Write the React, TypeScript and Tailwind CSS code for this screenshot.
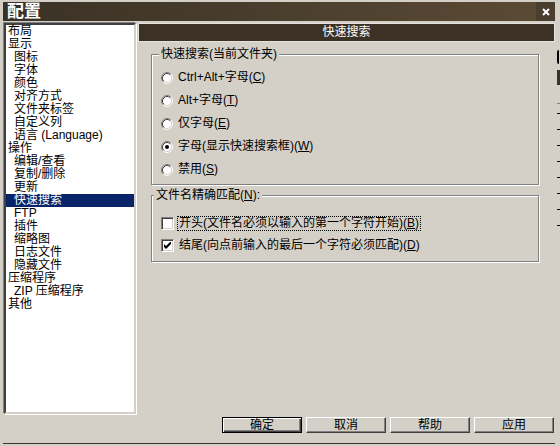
import React from 'react';

const treeItems: [string, number][] = [
  ['布局', 0],
  ['显示', 0],
  ['图标', 1],
  ['字体', 1],
  ['颜色', 1],
  ['对齐方式', 1],
  ['文件夹标签', 1],
  ['自定义列', 1],
  ['语言 (Language)', 1],
  ['操作', 0],
  ['编辑/查看', 1],
  ['复制/删除', 1],
  ['更新', 1],
  ['快速搜索', 1],
  ['FTP', 1],
  ['插件', 1],
  ['缩略图', 1],
  ['日志文件', 1],
  ['隐藏文件', 1],
  ['压缩程序', 0],
  ['ZIP 压缩程序', 1],
  ['其他', 0],
];

function Radio({ checked }: { checked?: boolean }) {
  return (
    <svg width="12" height="12" viewBox="0 0 12 12" className="shrink-0">
      <circle cx="6" cy="6" r="4.5" fill="#fff" />
      <path d="M2.11 9.89A5.5 5.5 0 0 1 9.89 2.11" fill="none" stroke="#808080" />
      <path d="M9.89 2.11A5.5 5.5 0 0 1 2.11 9.89" fill="none" stroke="#fff" />
      <path d="M2.82 9.18A4.5 4.5 0 0 1 9.18 2.82" fill="none" stroke="#404040" />
      <path d="M9.18 2.82A4.5 4.5 0 0 1 2.82 9.18" fill="none" stroke="#d4d0c8" />
      {checked && <circle cx="6" cy="6" r="2" fill="#000" />}
    </svg>
  );
}

function Checkbox({ checked }: { checked?: boolean }) {
  return (
    <div className="w-[13px] h-[13px] shrink-0 bg-white border border-t-[#808080] border-l-[#808080] border-b-white border-r-white shadow-[inset_1px_1px_0_#404040,inset_-1px_-1px_0_#d4d0c8] flex items-center justify-center">
      {checked && (
        <svg width="7" height="7" viewBox="0 0 7 7">
          <polygon points="0,2 2,4 7,-1 7,2 2,7 0,5" fill="#000" />
        </svg>
      )}
    </div>
  );
}

function Btn({ children, isDefault }: { children: React.ReactNode; isDefault?: boolean }) {
  if (isDefault) {
    return (
      <div className="w-[80px] h-[16px] border border-black shadow-[inset_1px_1px_0_#fff,inset_-1px_-1px_0_#404040,inset_-2px_-2px_0_#808080] flex items-center justify-center text-[12px] leading-[14px] text-black">
        {children}
      </div>
    );
  }
  return (
    <div className="w-[80px] h-[16px] border border-t-white border-l-white border-r-[#404040] border-b-[#404040] shadow-[inset_-1px_-1px_0_#808080] flex items-center justify-center text-[12px] leading-[14px] text-black">
      {children}
    </div>
  );
}

const radios: [string, string, string][] = [
  ['Ctrl+Alt+字母(', 'C', ')'],
  ['Alt+字母(', 'T', ')'],
  ['仅字母(', 'E', ')'],
  ['字母(显示快速搜索框)(', 'W', ')'],
  ['禁用(', 'S', ')'],
];

export default function App() {
  return (
    <div className="w-[560px] h-[446px] bg-[#d4d0c8] flex pt-[2px] pl-[3px] overflow-hidden font-['Liberation_Sans','Noto_Sans_CJK_SC',sans-serif] text-black">
      <div className="w-[552px] h-[442px] flex flex-col border-b border-[#3f3528]">
        {/* title bar */}
        <div className="h-[19px] flex items-center bg-linear-to-r from-[#3a3226] to-[#5b4b35]">
          <span className="pl-[4px] text-white font-bold text-[17px] leading-[19px]">配置</span>
          <div className="ml-auto w-[19px] h-full bg-[#4a3f2f] flex items-center justify-center">
            <svg width="8" height="8" viewBox="0 0 8 8">
              <path d="M1 1L7 7M7 1L1 7" stroke="#fff" strokeWidth="2" />
            </svg>
          </div>
        </div>

        <div className="flex-1 flex flex-col pl-[1px] pt-[2px]">
          <div className="flex gap-[2px] h-[391px]">
            {/* tree */}
            <div className="w-[132px] h-full bg-white border-2 border-t-[#404040] border-l-[#404040] border-b-[#d4d0c8] border-r-[#d4d0c8] shadow-[-1px_-1px_0_#808080,1px_1px_0_#fff] flex flex-col">
              {treeItems.map(([label, level]) => {
                const selected = label === '快速搜索';
                return (
                  <div
                    key={label}
                    className={
                      selected
                        ? 'h-[13px] leading-[13px] text-[12px] whitespace-nowrap bg-[#0a246a] text-white pl-[8px]'
                        : level === 0
                          ? 'h-[13px] leading-[13px] text-[12px] whitespace-nowrap pl-[2px]'
                          : 'h-[13px] leading-[13px] text-[12px] whitespace-nowrap pl-[8px]'
                    }
                  >
                    {label}
                  </div>
                );
              })}
            </div>

            {/* right panel */}
            <div className="w-[417px] flex flex-col">
              <div className="h-[19px] bg-[#3b3125] border border-[#e6e3dc] text-white text-[12px] leading-[17px] text-center">
                快速搜索
              </div>

              <fieldset className="ml-[13px] mt-[6px] w-[388px] border border-[#808080] shadow-[inset_1px_1px_0_#fff,1px_1px_0_#fff] pl-[9px] pt-[5px] pb-[3px]">
                <legend className="ml-[-2px] px-[2px] bg-[#d4d0c8] text-[12px] leading-[13px]">快速搜索(当前文件夹)</legend>
                {radios.map(([a, k, b], i) => (
                  <div key={k} className="h-[23px] flex items-center gap-[5px] text-[12px] leading-[13px]">
                    <Radio checked={i === 3} />
                    <span>
                      {a}
                      <span className="underline">{k}</span>
                      {b}
                    </span>
                  </div>
                ))}
              </fieldset>

              <fieldset className="ml-[13px] mt-[4px] w-[388px] border border-[#808080] shadow-[inset_1px_1px_0_#fff,1px_1px_0_#fff] pl-[9px] pt-[11px] pb-[5px]">
                <legend className="ml-[-7px] px-[2px] bg-[#d4d0c8] text-[12px] leading-[13px]">
                  文件名精确匹配(<span className="underline">N</span>):
                </legend>
                <div className="h-[21px] flex items-center gap-[4px] text-[12px] leading-[13px]">
                  <Checkbox />
                  <span className="outline-1 outline-dotted outline-black px-[1px]">
                    开头(文件名必须以输入的第一个字符开始)(<span className="underline">B</span>)
                  </span>
                </div>
                <div className="h-[22px] flex items-center gap-[4px] text-[12px] leading-[13px]">
                  <Checkbox checked />
                  <span className="px-[1px]">
                    结尾(向点前输入的最后一个字符必须匹配)(<span className="underline">D</span>)
                  </span>
                </div>
              </fieldset>
            </div>
          </div>

          {/* buttons */}
          <div className="flex justify-end gap-[4px] pr-[1px] mt-[3px]">
            <Btn isDefault>确定</Btn>
            <Btn>取消</Btn>
            <Btn>帮助</Btn>
            <Btn>应用</Btn>
          </div>
        </div>
      </div>

      {/* edge of the window behind */}
      <div className="flex-1 flex flex-col pl-[2px]">
        <div className="mt-[48px] h-[14px] w-[2px] border-l-2 border-black rounded-l-full" />
        <div className="mt-[6px] h-[15px] bg-[#3b3125]" />
        <div className="mt-[18px] border-t border-[#808080] flex flex-col gap-[15px] pt-[9px]">
          {[0, 1, 2, 3, 4, 5, 6, 7].map((n) => (
            <div key={n} className="h-px w-[3px] bg-black" />
          ))}
        </div>
      </div>
    </div>
  );
}
